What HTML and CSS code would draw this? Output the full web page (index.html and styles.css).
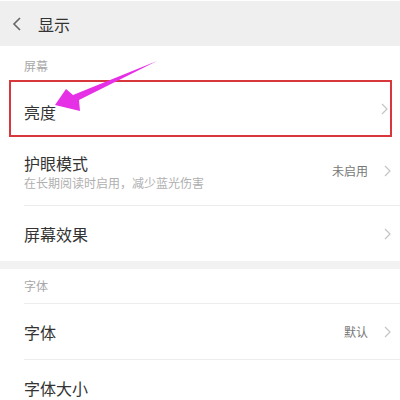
FILE: index.html
```html
<!DOCTYPE html>
<html lang="zh">
<head>
<meta charset="utf-8">
<link rel="stylesheet" href="styles.css">
</head>
<body>
<div class="page">
  <div class="header">
    <svg class="back" width="10" height="14" viewBox="0 0 10 14"><path d="M8 1 L2 7 L8 13" fill="none" stroke="#666" stroke-width="1.6"/></svg>
    <span class="title">显示</span>
  </div>

  <div class="label">屏幕</div>

  <div class="row boxed">
    <span class="name">亮度</span>
    <span class="right"><svg class="chev" width="7" height="12" viewBox="0 0 7 12"><path d="M1 1 L6 6 L1 11" fill="none" stroke="#c4c4c4" stroke-width="1.2"/></svg></span>
  </div>

  <div class="row tall">
    <div class="texts">
      <span class="name">护眼模式</span>
      <span class="sub">在长期阅读时启用，减少蓝光伤害</span>
    </div>
    <span class="right"><span class="value">未启用</span><svg class="chev" width="7" height="12" viewBox="0 0 7 12"><path d="M1 1 L6 6 L1 11" fill="none" stroke="#c4c4c4" stroke-width="1.2"/></svg></span>
  </div>
  <div class="divider"></div>
  <div class="row r55">
    <span class="name">屏幕效果</span>
    <span class="right"><svg class="chev" width="7" height="12" viewBox="0 0 7 12"><path d="M1 1 L6 6 L1 11" fill="none" stroke="#c4c4c4" stroke-width="1.2"/></svg></span>
  </div>

  <div class="band"></div>

  <div class="label l2">字体</div>
  <div class="divider"></div>
  <div class="row r56">
    <span class="name">字体</span>
    <span class="right"><span class="value">默认</span><svg class="chev" width="7" height="12" viewBox="0 0 7 12"><path d="M1 1 L6 6 L1 11" fill="none" stroke="#c4c4c4" stroke-width="1.2"/></svg></span>
  </div>
  <div class="divider"></div>
  <div class="row r56">
    <span class="name">字体大小</span>
  </div>

  <svg class="arrow" width="400" height="400" viewBox="0 0 400 400">
    <polygon points="55,105 66,89 73,95 157,61 79,100 80,111" fill="#e530e6"/>
  </svg>
</div>
</body>
</html>
```

FILE: styles.css
```css
html, body {
  margin: 0;
  padding: 0;
  background: #fff;
}
body {
  font-family: "Noto Sans CJK SC", "Noto Sans", sans-serif;
  color: #333;
  overflow: hidden;
}
.page {
  position: relative;
  width: 400px;
  height: 400px;
  overflow: hidden;
}
.header {
  margin-top: 1px;
  height: 45px;
  background: #efefef;
  display: flex;
  align-items: center;
  padding-left: 12px;
}
.back {
  margin-top: 1px;
}
.title {
  margin-left: 16px;
  font-size: 16px;
  color: #333;
  line-height: 20px;
}
.label {
  height: 34px;
  box-sizing: border-box;
  padding-left: 24px;
  padding-top: 12px;
  font-size: 12px;
  line-height: 16px;
  color: #a8a8a8;
}
.l2 {
  padding-top: 9px;
}
.row {
  display: flex;
  align-items: center;
  justify-content: space-between;
  padding-left: 24px;
  padding-right: 9px;
  box-sizing: border-box;
}
.boxed {
  height: 57px;
  margin: 0 8px 0 9px;
  border: 2px solid #d8383c;
  padding-left: 13px;
  padding-right: 2px;
}
.boxed .name {
  margin-top: 6px;
}
.tall {
  height: 68px;
}
.r55 {
  height: 55px;
}
.r56 {
  height: 55px;
}
.name {
  font-size: 16px;
  line-height: 20px;
  color: #333;
}
.texts {
  display: flex;
  flex-direction: column;
  gap: 1px;
  margin-top: 2px;
}
.sub {
  font-size: 12px;
  line-height: 18px;
  color: #b0b0b0;
}
.right {
  display: flex;
  align-items: center;
}
.value {
  font-size: 12px;
  color: #777;
  margin-right: 16px;
  line-height: 16px;
}
.chev {
  display: block;
}
.divider {
  height: 1px;
  background: #ececec;
  margin-left: 24px;
}
.band {
  height: 8px;
  background: #f2f2f2;
}
.arrow {
  position: absolute;
  left: 0;
  top: 0;
  pointer-events: none;
}
```
